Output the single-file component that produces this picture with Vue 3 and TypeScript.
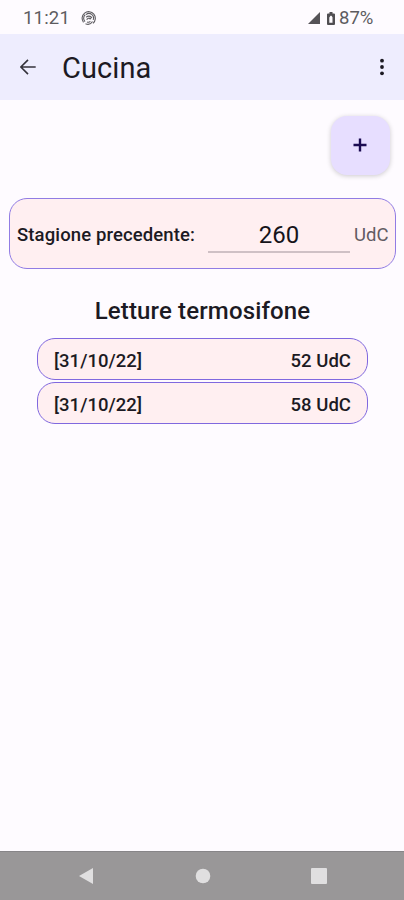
<script setup lang="ts">
import { ref } from 'vue'

interface Reading {
  id: number
  date: string
  value: number
}

const previousSeason = ref<string>('260')
const readings: Reading[] = [
  { id: 1, date: '31/10/22', value: 52 },
  { id: 2, date: '31/10/22', value: 58 },
]
</script>

<template>
  <div class="screen">
    <div class="status">
      <span class="clock">11:21</span>
      <svg class="spiral" viewBox="0 0 16 16" width="16" height="16">
        <path d="M2.500 12.300A6.600 6.600 0 1 1 12 13.300M4 11.700A4.900 4.900 0 0 1 4.200 4.700M5 4.600a4.600 4.600 0 0 1 7.200 5.300M5.200 7.200Q8 4.900 10.600 7.400L8.700 9.500M5.600 9.600q2.100-2.500 3.700-.7M4.500 13.800q4.600 1.800 7-2.300M6 12q2 .8 3.400-.6" />
      </svg>
      <svg class="signal" viewBox="0 0 12 12" width="12" height="12"><path d="M12 0v12H0z" /></svg>
      <svg class="battery" viewBox="0 0 8 13" width="8" height="13">
        <path fill-rule="evenodd" d="M2.500 0h3v1.500H7q1 0 1 1V12q0 1-1 1H1q-1 0-1-1V2.500q0-1 1-1h1.500zM3.500 3.800L2.300 5.500v5.200h3.200V5.300L4.500 3.800z" />
      </svg>
      <span class="percent">87%</span>
    </div>

    <header class="appbar">
      <button class="icon-btn" aria-label="Indietro">
        <svg viewBox="0 0 16 16" width="16" height="16"><path d="M15.700 8H1.200M8 .9L.9 8 8 15.100" /></svg>
      </button>
      <h1>Cucina</h1>
      <button class="icon-btn more" aria-label="Menu">
        <svg viewBox="0 0 4 18" width="4" height="18">
          <circle cx="2" cy="2.700" r="1.900" /><circle cx="2" cy="9" r="1.900" /><circle cx="2" cy="15.300" r="1.900" />
        </svg>
      </button>
    </header>

    <main>
      <button class="fab" aria-label="Aggiungi">
        <svg viewBox="0 0 14 14" width="14" height="14"><path d="M7 .5v13M.5 7h13" /></svg>
      </button>

      <section class="season">
        <label for="season">Stagione precedente:</label>
        <input id="season" v-model="previousSeason" type="text" />
        <span class="unit">UdC</span>
      </section>

      <h2>Letture termosifone</h2>
      <ul class="readings">
        <li v-for="r in readings" :key="r.id">
          <span class="date">[{{ r.date }}]</span>
          <span class="value">{{ r.value }} UdC</span>
        </li>
      </ul>
    </main>

    <nav class="navbar">
      <svg viewBox="0 0 16 18" width="16" height="18"><path d="M15 1v16L1 9z" /></svg>
      <svg viewBox="0 0 16 16" width="16" height="16"><circle cx="8" cy="8" r="7.300" /></svg>
      <svg viewBox="0 0 16 16" width="16" height="16"><rect width="16" height="16" rx="1" /></svg>
    </nav>
  </div>
</template>

<style>
body {
  background: #fefbff;
}
</style>

<style scoped>
.screen {
  box-sizing: border-box;
  width: 404px;
  height: 900px;
  display: flex;
  flex-direction: column;
  overflow: hidden;
  background: #fefbff;
  color: #1c1a23;
  font-family: Roboto, sans-serif;
}
.status {
  height: 34px;
  flex: none;
  display: flex;
  align-items: center;
  box-sizing: border-box;
  padding: 2px 30px 0 23px;
  color: #5d5b60;
  font-size: 18.500px;
}
.clock {
  width: 58px;
  letter-spacing: 0.2px;
}
.spiral {
  fill: none;
  stroke: #5d5b60;
  stroke-width: 1.1;
}
.signal {
  margin: 0 0 1px auto;
  fill: #555357;
}
.battery {
  margin: 0 4px 0 7px;
  fill: #504e52;
}
.percent {
  width: 35px;
  letter-spacing: 0;
}
.appbar {
  height: 66px;
  flex: none;
  box-sizing: border-box;
  padding: 0 20px;
  display: flex;
  align-items: center;
  background: #eeedfe;
}
.icon-btn {
  display: flex;
  padding: 0;
  border: 0;
  background: none;
}
.icon-btn svg {
  fill: none;
  stroke: #34323b;
  stroke-width: 1.6;
}
.more {
  margin-left: auto;
}
.more svg {
  fill: #1c1a23;
  stroke: none;
}
h1 {
  margin: 2px 0 0 26px;
  font-size: 29px;
  line-height: 34px;
  font-weight: 400;
  letter-spacing: 0.1px;
}
main {
  flex: 1;
  display: flex;
  flex-direction: column;
}
.fab {
  width: 59px;
  height: 59px;
  margin: 16px 14px 0 0;
  align-self: flex-end;
  display: flex;
  align-items: center;
  justify-content: center;
  padding: 0 1px 1px 0;
  border: 0;
  border-radius: 16px;
  background: #e7deff;
  box-shadow: 0 1px 5px rgba(0, 0, 0, 0.2);
}
.fab svg {
  stroke: #1b0b52;
  stroke-width: 2.4;
}
.season {
  box-sizing: border-box;
  height: 71px;
  margin: 23px 8px 0 9px;
  padding: 1px 8px 0 7px;
  display: flex;
  align-items: center;
  border: 1.500px solid #917ce4;
  border-radius: 18px;
  background: #ffeff1;
}
label {
  width: 191px;
  flex: none;
  padding-top: 2px;
  font-size: 18.500px;
  font-weight: 500;
  letter-spacing: 0.12px;
  white-space: nowrap;
}
input {
  width: 142px;
  height: 38px;
  box-sizing: border-box;
  padding: 3px 0 0;
  border: 0;
  border-bottom: 2px solid #cfc0c5;
  border-radius: 0;
  background: none;
  color: #16141a;
  font: 400 24px Roboto, sans-serif;
  text-align: center;
  outline: none;
}
.unit {
  margin-left: 4px;
  padding-top: 2px;
  color: #625b62;
  font-size: 18.500px;
}
h2 {
  margin: 28px 0 0 1px;
  font-size: 24px;
  line-height: 28px;
  font-weight: 500;
  letter-spacing: 0.14px;
  text-align: center;
}
.readings {
  list-style: none;
  margin: 13px 36px 0 37px;
  padding: 0;
  display: flex;
  flex-direction: column;
  gap: 2px;
}
li {
  box-sizing: border-box;
  height: 42px;
  padding: 4px 16px 0;
  display: flex;
  align-items: center;
  justify-content: space-between;
  border: 1px solid #8068df;
  border-radius: 18px;
  background: #ffeff1;
  font-size: 18.500px;
  font-weight: 500;
  letter-spacing: 0.04px;
}
.navbar {
  height: 49px;
  flex: none;
  box-sizing: border-box;
  padding: 0 77px 0 78px;
  display: flex;
  align-items: center;
  justify-content: space-between;
  background: #999798;
  border-top: 1px solid #878588;
}
.navbar svg {
  fill: #e0dfe0;
}
</style>
